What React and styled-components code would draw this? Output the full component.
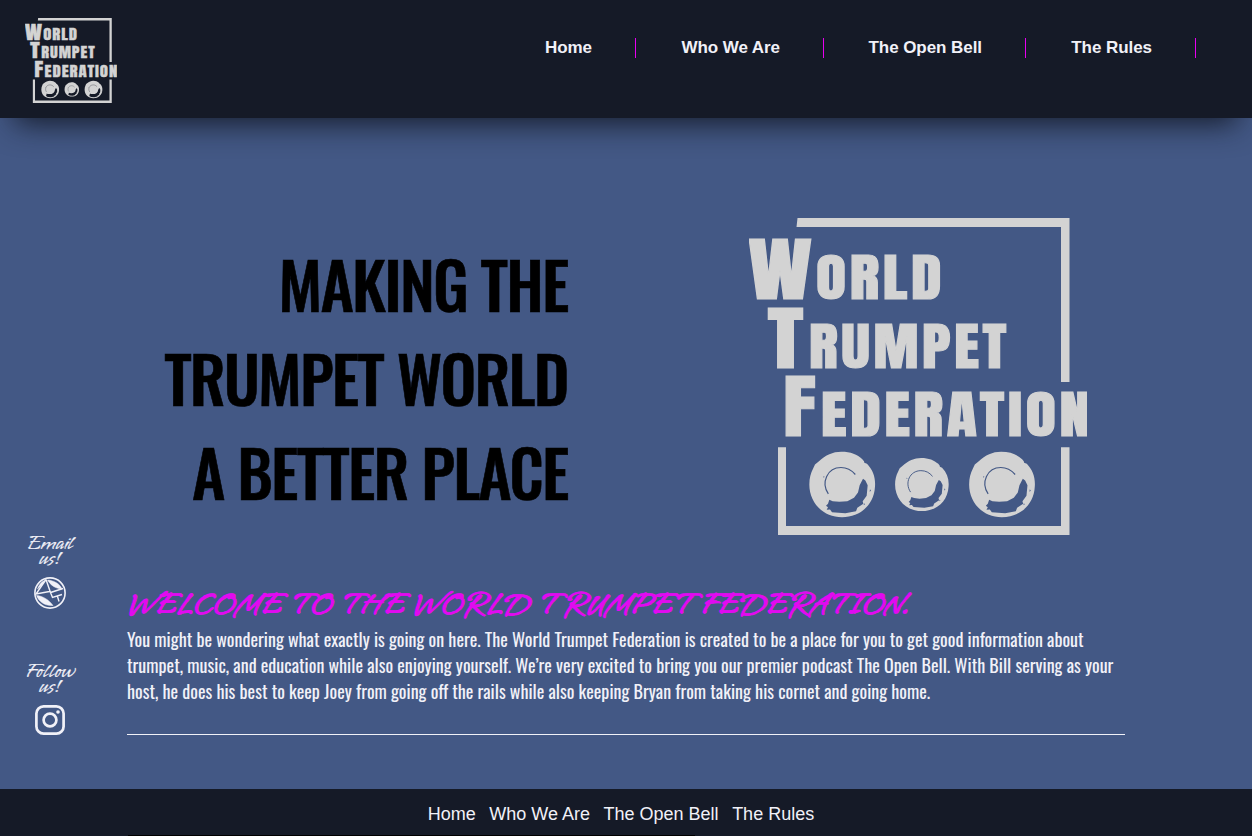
import React from 'react';
import styled, { createGlobalStyle } from 'styled-components';

const GlobalStyle = createGlobalStyle`
  * { box-sizing: border-box; }
  body { margin: 0; background: #435885; overflow: hidden; }
  h1, h2, p, ul { margin: 0; padding: 0; }
  a { color: inherit; text-decoration: none; }
`;

const Page = styled.div`
  display: flex;
  flex-direction: column;
  height: 836px;
  overflow: hidden;
  font-family: "Liberation Sans", Arial, sans-serif;
  color: #f1f1f8;
`;

const Header = styled.header`
  display: flex;
  justify-content: space-between;
  flex: none;
  height: 118px;
  padding: 18px 56px 0 25px;
  background: #151a27;
  box-shadow: 0 20px 30px -15px rgba(12, 15, 24, 0.85);
`;

const Nav = styled.ul`
  display: flex;
  margin-top: 20px;
  height: 20px;
  list-style: none;
`;

const NavItem = styled.li`
  width: ${(p) => p.$width}px;
  padding-right: 43px;
  border-right: 1px solid #e600f0;
  font-size: 17px;
  font-weight: 700;
  letter-spacing: -0.06px;
  line-height: 19px;
  text-align: right;
  white-space: nowrap;
`;

const Main = styled.main`
  display: flex;
  flex: none;
  height: 671px;
`;

const Side = styled.aside`
  display: flex;
  flex-direction: column;
  align-items: center;
  width: 100px;
  margin-right: 27px;
  padding-top: 418px;
`;

const Contact = styled.a`
  display: flex;
  flex: none;
  flex-direction: column;
  align-items: center;
  height: 128px;
  font-family: "Vujahday Script", cursive;
  font-size: 20px;
  line-height: 15px;
  text-align: center;
  -webkit-text-stroke: 0.2px currentColor;
  svg { margin-top: 11px; }
`;

const Content = styled.div`
  width: 998px;
`;

const Hero = styled.section`
  display: flex;
  height: 469px;
  padding-top: 100px;
`;

const Slogan = styled.h1`
  width: 440.5px;
  margin: 18px 181.5px 0 0;
  font-family: Oswald, sans-serif;
  font-size: 64px;
  font-weight: 500;
  line-height: 94px;
  letter-spacing: -1.85px;
  -webkit-text-stroke: 0.6px #000;
  text-align: right;
  text-transform: uppercase;
  white-space: nowrap;
  color: #000;
`;

const Welcome = styled.section`
  height: 148px;
  border-bottom: 1px solid #f1f1f8;
`;

const Title = styled.h2`
  margin-bottom: 4px;
  font-family: "Vujahday Script", cursive;
  font-size: 30px;
  line-height: 35px;
  font-weight: 700;
  text-transform: uppercase;
  white-space: nowrap;
  color: #e10af0;
  -webkit-text-stroke: 0.4px #e10af0;
`;

const Text = styled.p`
  font-family: Oswald, sans-serif;
  font-size: 18px;
  font-weight: 400;
  line-height: 26px;
  letter-spacing: 0.02px;
  white-space: nowrap;
`;

const Footer = styled.footer`
  display: flex;
  flex-direction: column;
  justify-content: space-between;
  flex: none;
  height: 47px;
  background: #151a27;
`;

const FooterNav = styled.nav`
  display: flex;
  justify-content: center;
  gap: 13.5px;
  padding: 15px 10px 0 0;
  font-size: 18px;
  line-height: 21px;
`;

const FooterEdge = styled.div`
  width: 567px;
  height: 1px;
  margin-left: 128px;
  background: #000;
`;

const LogoWord = styled.text`
  font-family: Anton, Oswald, sans-serif;
  font-size: ${(p) => p.$size}px;
  letter-spacing: ${(p) => p.$gap}px;
  fill: #d3d3d3;
  stroke: #d3d3d3;
  stroke-width: 1px;
`;

function Word({ x, y, w, size, gap = 0, children }) {
  return (
    <LogoWord x={x} y={y} $size={size} $gap={gap} textLength={w} lengthAdjust="spacingAndGlyphs">
      {children}
    </LogoWord>
  );
}

function Valve({ x, scale, hole }) {
  return (
    <g transform={`translate(${x} 266.5) scale(${scale / 3})`}>
      <path
        d="M-2-98c28 0 48 8 63 22l5 6 1 5 8 3c18 19 26 41 24 68-3 56-45 92-99 92-58 0-98-44-98-98 0-18 4-34 11-47l6-13 11-9C-49-88-28-98-2-98Z"
        fill="#d3d3d3"
      />
      <path d="M-41 28C-64-6-44-51-3-51c18 0 31 7 43 21" fill="none" stroke={hole} strokeWidth="3.500" />
      <path
        d="M63-17 70-12 77 2 74 34 62 50 64 58 46 70 42 80 10 86-30 83-36 75-46 76-42 68-48 64-42 58-38 46-28 50-8 52 16 50 36 40 48 24 53 2Z"
        fill={hole}
      />
      <path d="M84 14l3 5-4 3zM66 56l3 3-4 3zM-56-25l4 2-3 3z" fill={hole} />
    </g>
  );
}

function Logo({ width, height, hole }) {
  return (
    <svg width={width} height={height} viewBox="0 0 338 317" preserveAspectRatio="none" role="img" aria-label="World Trumpet Federation">
      <g fill="#d3d3d3">
        <path d="M48.500 0H320.500V164H312V9H47.500Z" />
        <path d="M29 229.300H37V308H312V229.300H320.500V317H29Z" />
        <Word x={-1} y={80.5} w={64} size={69.5}>W</Word>
        <Word x={67} y={80.5} w={129} size={51} gap={3}>ORLD</Word>
        <Word x={18.5} y={149.5} w={36} size={70.5}>T</Word>
        <Word x={60} y={149.5} w={201} size={51} gap={3}>RUMPET</Word>
        <Word x={34} y={218.2} w={33} size={70.5}>F</Word>
        <Word x={72} y={218.2} w={273} size={51} gap={3}>EDERATION</Word>
      </g>
      <Valve x={93} scale={1} hole={hole} />
      <Valve x={172.7} scale={0.815} hole={hole} />
      <Valve x={252.8} scale={1} hole={hole} />
    </svg>
  );
}

function MailIcon() {
  return (
    <svg width="32" height="32" viewBox="0 0 32 32" fill="none" stroke="#f1f1f8">
      <circle cx="16" cy="16" r="15.100" strokeWidth="1.600" />
      <path
        d="M13.500 3C20 3.500 26 7 28 12 21 11.500 16.500 8 13.500 3ZM2.500 18.500C9 19 15 23 19 28.500 11 29 5 25 2.500 18.500ZM3.500 12C5 7.500 7.500 4.500 11 3.500L8 8Z"
        fill="#f1f1f8"
        strokeWidth=".5"
      />
      <path d="M12 2.500 16.500 15.500 29 11.500M12 2.500 2 17 15.500 14.500M16.500 15.500 18.500 20.500 28 17.500M23.500 19.500 25 24.500" strokeWidth="1.400" />
    </svg>
  );
}

function InstagramIcon() {
  return (
    <svg width="30" height="30" viewBox="0 0 30 30" fill="none" stroke="#f1f1f8">
      <rect x="1.400" y="1.400" width="27.200" height="27.200" rx="7.200" strokeWidth="2.700" />
      <circle cx="15" cy="15" r="6.400" strokeWidth="2.700" />
      <circle cx="23" cy="7" r="1.800" fill="#f1f1f8" stroke="none" />
    </svg>
  );
}

const links = [
  { label: 'Home', width: 136 },
  { label: 'Who We Are', width: 188 },
  { label: 'The Open Bell', width: 202 },
  { label: 'The Rules', width: 170 },
];

export default function App() {
  return (
    <Page>
      <GlobalStyle />
      <Header>
        <Logo width={91.5} height={85} hole="#151a27" />
        <Nav>
          {links.map((l) => (
            <NavItem key={l.label} $width={l.width}><a href="#">{l.label}</a></NavItem>
          ))}
        </Nav>
      </Header>
      <Main>
        <Side>
          <Contact href="#">
            <span>Email<br />us!</span>
            <MailIcon />
          </Contact>
          <Contact href="#">
            <span>Follow<br />us!</span>
            <InstagramIcon />
          </Contact>
        </Side>
        <Content>
          <Hero>
            <Slogan>Making the<br />trumpet world<br />a better place</Slogan>
            <Logo width={338} height={317} hole="#435885" />
          </Hero>
          <Welcome>
            <Title>Welcome to the World Trumpet Federation.</Title>
            <Text>
              You might be wondering what exactly is going on here. The World Trumpet Federation is created to be a place for you to get good information about<br />
              trumpet, music, and education while also enjoying yourself. We’re very excited to bring you our premier podcast The Open Bell. With Bill serving as your<br />
              host, he does his best to keep Joey from going off the rails while also keeping Bryan from taking his cornet and going home.
            </Text>
          </Welcome>
        </Content>
      </Main>
      <Footer>
        <FooterNav>
          {links.map((l) => (
            <a key={l.label} href="#">{l.label}</a>
          ))}
        </FooterNav>
        <FooterEdge />
      </Footer>
    </Page>
  );
}
